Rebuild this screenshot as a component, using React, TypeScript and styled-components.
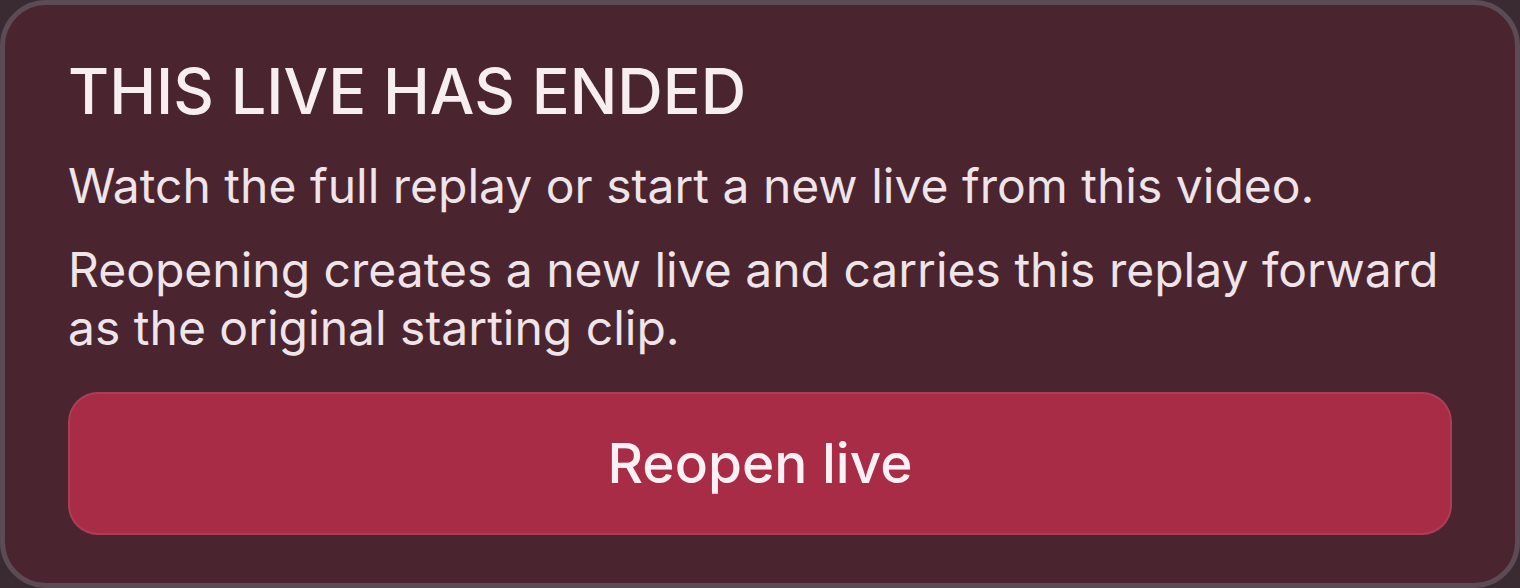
import React from "react";
import styled, { createGlobalStyle } from "styled-components";

const Global = createGlobalStyle`
  html, body { margin: 0; padding: 0; background: #3a2b32; }
  body { font-family: Inter, "Noto Sans", sans-serif; -webkit-font-smoothing: antialiased; }
`;

const Card = styled.section`
  box-sizing: border-box;
  width: 1520px;
  height: 588px;
  border: 5px solid #5c4a54;
  border-radius: 46px;
  background: #4a2530;
  padding: 49px 63px 48px 63px;
  display: flex;
  flex-direction: column;
  color: #f6eef1;
`;

const Title = styled.h1`
  margin: 0;
  font-size: 63px;
  line-height: 75.6px;
  font-weight: 500;
  letter-spacing: 0;
`;

const Text = styled.p<{ $gap?: number }>`
  margin: ${(p) => p.$gap ?? 0}px 0 0 0;
  font-size: 48px;
  line-height: 58px;
  font-weight: 400;
  color: #efe4e8;
`;

const Button = styled.button`
  margin-top: 35px;
  box-sizing: border-box;
  width: 100%;
  height: 143px;
  flex-shrink: 0;
  border: 2px solid rgba(255, 255, 255, 0.08);
  border-radius: 30px;
  background: #a82c46;
  color: #fbf1f4;
  font-family: Inter, "Noto Sans", sans-serif;
  font-size: 55px;
  font-weight: 500;
  cursor: pointer;
`;

export default function App() {
  return (
    <>
      <Global />
      <Card>
        <Title>THIS LIVE HAS ENDED</Title>
        <Text $gap={27}>Watch the full replay or start a new live from this video.</Text>
        <Text $gap={26}>
          Reopening creates a new live and carries this replay forward as the original starting clip.
        </Text>
        <Button>Reopen live</Button>
      </Card>
    </>
  );
}
